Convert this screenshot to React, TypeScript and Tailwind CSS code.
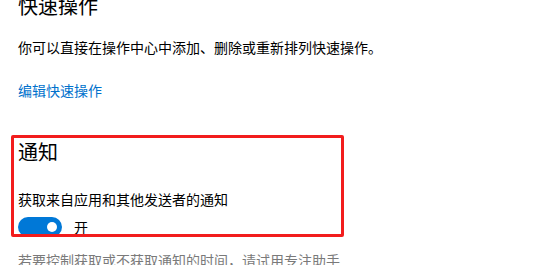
const font = { fontFamily: '"Noto Sans CJK SC", "Noto Sans", sans-serif' };

function Toggle({ on }: { on: boolean }) {
  return (
    <div className="flex items-center gap-3">
      <div
        className={
          on
            ? "relative h-[20px] w-[44px] rounded-full bg-[#0078d7]"
            : "relative h-[20px] w-[44px] rounded-full border-2 border-black"
        }
      >
        <div className="absolute right-[5px] top-[5px] h-[10px] w-[10px] rounded-full bg-white" />
      </div>
      <span className="text-[14px] leading-[20px] text-black">{on ? "开" : "关"}</span>
    </div>
  );
}

export default function App() {
  return (
    <div className="relative h-[265px] w-[536px] overflow-hidden bg-white" style={font}>
      <div className="flex flex-col pl-[18px]">
        <h2 className="-mt-[8px] text-[20px] leading-[28px] text-black">快速操作</h2>
        <p className="mt-[17px] text-[14px] leading-[20px] text-black">
          你可以直接在操作中心中添加、删除或重新排列快速操作。
        </p>
        <a className="mt-[23px] text-[14px] leading-[20px] text-[#0071cc]">编辑快速操作</a>

        <h2 className="mt-[38px] text-[20px] leading-[28px] text-black">通知</h2>
        <p className="mt-[23px] text-[14px] leading-[20px] text-black">
          获取来自应用和其他发送者的通知
        </p>
        <div className="mt-[8px]">
          <Toggle on />
        </div>
        <p className="mt-[13px] text-[14px] leading-[20px] text-[#7a7a7a]">
          若要控制获取或不获取通知的时间，请试用专注助手
        </p>
      </div>

      {/* annotation frame */}
      <div className="pointer-events-none absolute left-[11px] top-[135px] h-[102px] w-[333px] rounded-[2px] border-[3px] border-[#f21d1d]" />
    </div>
  );
}
